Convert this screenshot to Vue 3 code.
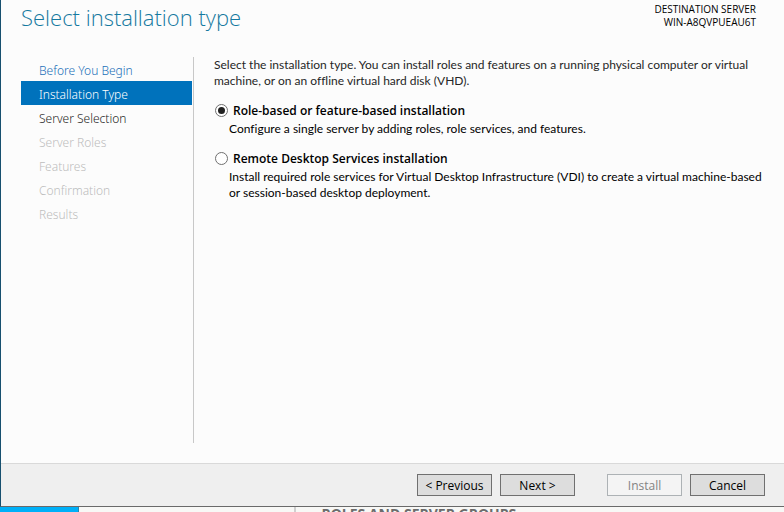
<script setup>
import { ref } from 'vue'

const steps = [
  { name: 'Before You Begin', state: 'visited' },
  { name: 'Installation Type', state: 'active' },
  { name: 'Server Selection', state: 'next' },
  { name: 'Server Roles', state: 'disabled' },
  { name: 'Features', state: 'disabled' },
  { name: 'Confirmation', state: 'disabled' },
  { name: 'Results', state: 'disabled' },
]

const options = [
  {
    id: 'role',
    title: 'Role-based or feature-based installation',
    lines: ['Configure a single server by adding roles, role services, and features.'],
  },
  {
    id: 'rds',
    title: 'Remote Desktop Services installation',
    lines: [
      'Install required role services for Virtual Desktop Infrastructure (VDI) to create a virtual machine-based',
      'or session-based desktop deployment.',
    ],
  },
]

const selected = ref('role')
</script>

<template>
  <div class="screen">
    <main class="wizard">
      <header class="head">
        <h1 class="title">Select installation type</h1>
        <p class="server">
          <span>DESTINATION SERVER</span>
          <span>WIN-A8QVPUEAU6T</span>
        </p>
      </header>

      <div class="body">
        <nav class="steps">
          <a v-for="s in steps" :key="s.name" href="#" class="step" :class="s.state">{{ s.name }}</a>
        </nav>
        <section class="content">
          <p class="intro">
            <span>Select the installation type. You can install roles and features on a running physical computer or virtual</span>
            <span>machine, or on an offline virtual hard disk (VHD).</span>
          </p>
          <div v-for="o in options" :key="o.id" class="option">
            <input :id="o.id" v-model="selected" class="radio" type="radio" name="type" :value="o.id" />
            <label class="label" :for="o.id">{{ o.title }}</label>
            <p class="desc">
              <span v-for="l in o.lines" :key="l">{{ l }}</span>
            </p>
          </div>
        </section>
      </div>

      <footer class="foot">
        <div class="pair">
          <button class="btn" type="button">&lt; Previous</button>
          <button class="btn" type="button">Next &gt;</button>
        </div>
        <div class="pair">
          <button class="btn" type="button" disabled>Install</button>
          <button class="btn" type="button">Cancel</button>
        </div>
      </footer>
    </main>

    <div class="behind">
      <div class="tile"></div>
      <div class="gap"></div>
      <div class="groups">ROLES AND SERVER GROUPS</div>
    </div>
  </div>
</template>

<style>
body {
  margin: 0;
  overflow: hidden;
}
</style>

<style scoped>
.screen {
  display: flex;
  flex-direction: column;
  height: 100vh;
  overflow: hidden;
  font-family: "Open Sans", sans-serif;
  font-size: 12px;
  line-height: 16px;
  color: #000;
}
.wizard {
  flex: 1;
  display: flex;
  flex-direction: column;
  min-height: 0;
  background: #fcfcfc;
  border-left: 1px solid #17506f;
  border-bottom: 1px solid #6a6a6a;
}
.head {
  display: flex;
  justify-content: space-between;
  padding: 2px 28px 0 20px;
}
.title {
  margin: 0;
  font-size: 22px;
  line-height: 30px;
  font-weight: 300;
  color: #15799f;
}
.server {
  margin: 0;
  padding-top: 1px;
  font-size: 10px;
  line-height: 13px;
  text-align: right;
}
.server span,
.intro span,
.desc span {
  display: block;
  white-space: nowrap;
}
.body {
  flex: 1;
  display: flex;
  min-height: 0;
  padding: 25px 0 20px 20px;
}
.steps {
  flex: none;
  width: 171px;
  padding-right: 1px;
  border-right: 1px solid #c8c8c8;
}
.step {
  display: block;
  padding: 4px 18px 0;
  font-family: "Noto Sans", sans-serif;
  font-size: 12px;
  line-height: 20px;
  font-weight: 300;
  text-decoration: none;
  color: #262626;
}
.visited {
  color: #1a6fb8;
}
.active {
  color: #fff;
  background: #0072bc;
}
.disabled {
  color: #bdbdbd;
}
.content {
  flex: 1;
  min-width: 0;
  padding-left: 20px;
  font-family: Lato, sans-serif;
  font-variant-ligatures: none;
}
.intro {
  margin: 0 0 14px;
  color: #262626;
}
.option {
  display: grid;
  grid-template-columns: 14px 1fr;
  column-gap: 5px;
  align-items: start;
  margin-bottom: 14px;
}
.radio {
  appearance: none;
  display: grid;
  place-items: center;
  justify-self: end;
  box-sizing: border-box;
  width: 13px;
  height: 13px;
  margin: 1px 0 0;
  border: 1px solid #707070;
  border-radius: 50%;
  background: #fff;
}
.radio:checked::before {
  content: "";
  width: 7px;
  height: 7px;
  border-radius: 50%;
  background: #212121;
}
.label {
  font-family: "Open Sans", sans-serif;
  font-weight: 600;
}
.desc {
  grid-column: 1 / -1;
  margin: 0;
  padding: 2px 0 0 15px;
}
.foot {
  display: flex;
  justify-content: flex-end;
  gap: 32px;
  padding: 10px 19px;
  background: #efefef;
  border-top: 1px solid #d9d9d9;
}
.pair {
  display: flex;
  gap: 8px;
}
.btn {
  width: 75px;
  height: 22px;
  padding: 2px 0 0;
  border: 1px solid #707070;
  background: #ddd;
  font: inherit;
  color: #000;
}
.btn:disabled {
  border-color: #adb2b5;
  background: #f4f4f4;
  color: #838383;
}
.behind {
  display: flex;
  height: 5px;
  overflow: hidden;
  background: #f8f8f6;
}
.tile {
  width: 10%;
  background: #00b0f8;
  border-right: 1px solid #2a86ad;
}
.gap {
  width: 215px;
  border-right: 2px solid #d0d0d0;
}
.groups {
  padding: 1px 0 0 25px;
  font-size: 14px;
  line-height: 12px;
  font-weight: 700;
  color: #6c6c6c;
  white-space: nowrap;
}
</style>
